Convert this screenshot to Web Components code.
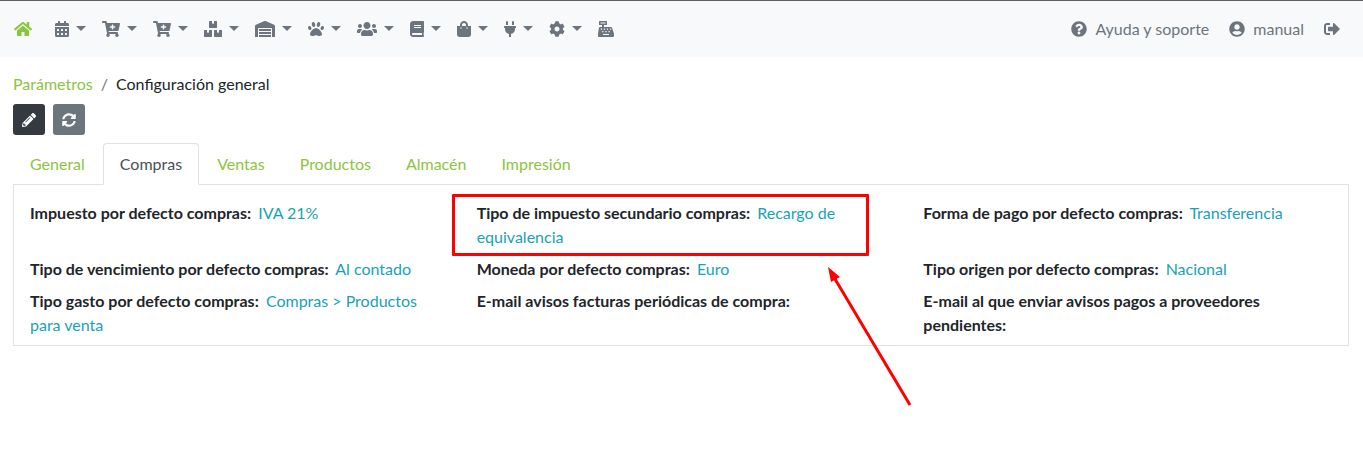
<!DOCTYPE html>
<html lang="es">
<head>
<meta charset="utf-8">
<title>Configuración general</title>
<style>
  body {
    margin: 0;
    min-height: 100vh;
    font-family: Lato, "Liberation Sans", sans-serif;
    font-size: 16px;
    line-height: 24px;
    color: #212529;
    background-color: #fff;
  }
</style>
</head>
<body>

<app-navbar>
  <nav-item icon="home" label="Inicio" href="#inicio" active></nav-item>
  <nav-item icon="calendar" label="Agenda" menu></nav-item>
  <nav-item icon="cart" label="Compras" menu></nav-item>
  <nav-item icon="cart" label="Ventas" menu></nav-item>
  <nav-item icon="boxes" label="Productos" menu></nav-item>
  <nav-item icon="warehouse" label="Almacén" menu></nav-item>
  <nav-item icon="paw" label="Animales" menu></nav-item>
  <nav-item icon="users" label="Contactos" menu></nav-item>
  <nav-item icon="book" label="Contabilidad" menu></nav-item>
  <nav-item icon="bag" label="Tienda" menu></nav-item>
  <nav-item icon="plug" label="Conexiones" menu></nav-item>
  <nav-item icon="cog" label="Ajustes" menu></nav-item>
  <nav-item icon="register" label="Caja" href="#caja"></nav-item>
  <nav-item slot="end" icon="question" href="#ayuda">Ayuda y soporte</nav-item>
  <nav-item slot="end" icon="user" href="#usuario">manual</nav-item>
  <nav-item slot="end" icon="signout" label="Salir" href="#salir"></nav-item>
</app-navbar>

<settings-page>
  <bread-crumb slot="head" parent="Parámetros">Configuración general</bread-crumb>
  <icon-button slot="tools" icon="pencil" label="Editar" dark></icon-button>
  <icon-button slot="tools" icon="sync" label="Actualizar"></icon-button>
  <tab-link slot="tabs">General</tab-link>
  <tab-link slot="tabs" active>Compras</tab-link>
  <tab-link slot="tabs">Ventas</tab-link>
  <tab-link slot="tabs">Productos</tab-link>
  <tab-link slot="tabs">Almacén</tab-link>
  <tab-link slot="tabs">Impresión</tab-link>

  <setting-field label="Impuesto por defecto compras:">IVA 21%</setting-field>
  <setting-field label="Tipo de impuesto secundario compras:" marked>Recargo de equivalencia</setting-field>
  <setting-field label="Forma de pago por defecto compras:">Transferencia</setting-field>
  <setting-field label="Tipo de vencimiento por defecto compras:">Al contado</setting-field>
  <setting-field label="Moneda por defecto compras:">Euro</setting-field>
  <setting-field label="Tipo origen por defecto compras:">Nacional</setting-field>
  <setting-field label="Tipo gasto por defecto compras:">Compras &gt; Productos para venta</setting-field>
  <setting-field label="E-mail avisos facturas periódicas de compra:"></setting-field>
  <setting-field label="E-mail al que enviar avisos pagos a proveedores pendientes:"></setting-field>
</settings-page>

<script>
// [width, markup], every icon is 512 units high
const ICONS = {
  home: [576, '<path d="M280.37 148.26L96 300.11V464a16 16 0 0 0 16 16l112.06-.29a16 16 0 0 0 15.92-16V368a16 16 0 0 1 16-16h64a16 16 0 0 1 16 16v95.64a16 16 0 0 0 16 16.05L464 480a16 16 0 0 0 16-16V300L295.67 148.26a12.19 12.19 0 0 0-15.3 0zM571.6 251.47L488 182.56V44.05a12 12 0 0 0-12-12h-56a12 12 0 0 0-12 12v72.61L318.47 43a48 48 0 0 0-61 0L4.34 251.47a12 12 0 0 0-1.6 16.9l25.5 31A12 12 0 0 0 45.15 301l235.22-193.74a12.19 12.19 0 0 1 15.3 0L530.9 301a12 12 0 0 0 16.9-1.6l25.5-31a12 12 0 0 0-1.7-16.93z"/>'],
  calendar: [448, '<path fill-rule="evenodd" d="M0 464c0 26.500 21.500 48 48 48h352c26.500 0 48-21.500 48-48V192H0v272zM332 256h40a12 12 0 0 1 12 12v40a12 12 0 0 1-12 12h-40a12 12 0 0 1-12-12v-40a12 12 0 0 1 12-12zm0 128h40a12 12 0 0 1 12 12v40a12 12 0 0 1-12 12h-40a12 12 0 0 1-12-12v-40a12 12 0 0 1 12-12zM204 256h40a12 12 0 0 1 12 12v40a12 12 0 0 1-12 12h-40a12 12 0 0 1-12-12v-40a12 12 0 0 1 12-12zm0 128h40a12 12 0 0 1 12 12v40a12 12 0 0 1-12 12h-40a12 12 0 0 1-12-12v-40a12 12 0 0 1 12-12zM76 256h40a12 12 0 0 1 12 12v40a12 12 0 0 1-12 12H76a12 12 0 0 1-12-12v-40a12 12 0 0 1 12-12zm0 128h40a12 12 0 0 1 12 12v40a12 12 0 0 1-12 12H76a12 12 0 0 1-12-12v-40a12 12 0 0 1 12-12z"/><path d="M400 64h-48V16c0-8.800-7.200-16-16-16h-32c-8.800 0-16 7.200-16 16v48H160V16c0-8.800-7.200-16-16-16h-32c-8.800 0-16 7.200-16 16v48H48C21.500 64 0 85.500 0 112v48h448v-48c0-26.500-21.500-48-48-48z"/>'],
  cart: [576, '<path d="M504.717 320H211.572l6.545 32h268.418c15.401 0 26.816 14.301 23.403 29.319l-5.517 24.276C523.112 414.668 536 433.828 536 456c0 31.202-25.519 56.444-56.824 55.994-29.823-.429-54.35-24.631-55.155-54.447-.44-16.287 6.085-31.049 16.803-41.548H231.176C241.553 426.165 248 440.326 248 456c0 31.813-26.528 57.431-58.67 55.938-28.54-1.325-51.751-24.385-53.251-52.917-1.158-22.034 10.436-41.455 28.051-51.586L93.883 64H24C10.745 64 0 53.255 0 40V24C0 10.745 10.745 0 24 0h102.529c11.401 0 21.228 8.021 23.513 19.19L159.208 64H551.99c15.401 0 26.816 14.301 23.403 29.319l-47.273 208C525.637 312.246 515.923 320 504.717 320zM408 168h-48v-40c0-8.837-7.163-16-16-16h-16c-8.837 0-16 7.163-16 16v40h-48c-8.837 0-16 7.163-16 16v16c0 8.837 7.163 16 16 16h48v40c0 8.837 7.163 16 16 16h16c8.837 0 16-7.163 16-16v-40h48c8.837 0 16-7.163 16-16v-16c0-8.837-7.163-16-16-16z"/>'],
  boxes: [576, '<path d="M560 288h-80v96l-32-21.300-32 21.300v-96h-80c-8.800 0-16 7.200-16 16v192c0 8.800 7.200 16 16 16h224c8.800 0 16-7.200 16-16V304c0-8.800-7.200-16-16-16zm-384-64h224c8.800 0 16-7.200 16-16V16c0-8.800-7.200-16-16-16h-80v96l-32-21.300L256 96V0h-80c-8.800 0-16 7.200-16 16v192c0 8.800 7.200 16 16 16zm64 64h-80v96l-32-21.300L96 384v-96H16c-8.800 0-16 7.200-16 16v192c0 8.800 7.200 16 16 16h224c8.800 0 16-7.200 16-16V304c0-8.800-7.200-16-16-16z"/>'],
  warehouse: [640, '<path d="M504 352H136.4c-4.400 0-8 3.600-8 8l-.1 48c0 4.400 3.600 8 8 8H504c4.400 0 8-3.600 8-8v-48c0-4.400-3.600-8-8-8zm0 96H136.1c-4.400 0-8 3.600-8 8l-.1 48c0 4.400 3.600 8 8 8h368c4.400 0 8-3.600 8-8v-48c0-4.400-3.600-8-8-8zm0-192H136.6c-4.400 0-8 3.600-8 8l-.1 48c0 4.400 3.600 8 8 8H504c4.400 0 8-3.600 8-8v-48c0-4.400-3.600-8-8-8zm106.5-139L338.4 3.700a48.150 48.150 0 0 0-36.900 0L29.500 117C11.700 124.500 0 141.900 0 161.300V504c0 4.400 3.600 8 8 8h80c4.400 0 8-3.600 8-8V256c0-17.600 14.600-32 32.600-32h382.800c18 0 32.600 14.400 32.600 32v248c0 4.400 3.600 8 8 8h80c4.400 0 8-3.600 8-8V161.300c0-19.400-11.700-36.800-29.500-44.300z"/>'],
  paw: [512, '<path d="M256 224c-79.410 0-192 122.760-192 200.250 0 34.900 26.810 55.750 71.740 55.750 48.840 0 81.090-25.080 120.260-25.080 39.510 0 71.850 25.080 120.260 25.080 44.930 0 71.740-20.850 71.740-55.750C448 346.760 335.410 224 256 224z"/><ellipse cx="56" cy="224" rx="52" ry="66" transform="rotate(-17 56 224)"/><ellipse cx="456" cy="224" rx="52" ry="66" transform="rotate(17 456 224)"/><ellipse cx="176" cy="112" rx="54" ry="80" transform="rotate(-15 176 112)"/><ellipse cx="336" cy="112" rx="54" ry="80" transform="rotate(15 336 112)"/>'],
  users: [640, '<path d="M96 224c35.300 0 64-28.700 64-64s-28.700-64-64-64-64 28.700-64 64 28.700 64 64 64zm448 0c35.300 0 64-28.700 64-64s-28.700-64-64-64-64 28.700-64 64 28.700 64 64 64zm32 32h-64c-17.600 0-33.500 7.100-45.100 18.600 40.300 22.100 68.900 62 75.100 109.400h66c17.700 0 32-14.300 32-32v-32c0-35.300-28.700-64-64-64zm-256 0c61.900 0 112-50.100 112-112S381.900 32 320 32 208 82.100 208 144s50.100 112 112 112zm76.800 32h-8.300c-20.800 10-43.900 16-68.500 16s-47.600-6-68.500-16h-8.300C179.600 288 128 339.600 128 403.200V432c0 26.500 21.500 48 48 48h288c26.500 0 48-21.500 48-48v-28.800c0-63.600-51.600-115.200-115.200-115.200zm-223.700-13.400C161.500 263.100 145.600 256 128 256H64c-35.300 0-64 28.700-64 64v32c0 17.700 14.300 32 32 32h65.900c6.300-47.400 34.900-87.300 75.200-109.400z"/>'],
  book: [448, '<path d="M448 360V24c0-13.300-10.700-24-24-24H96C43 0 0 43 0 96v320c0 53 43 96 96 96h328c13.300 0 24-10.700 24-24v-16c0-7.500-3.500-14.300-8.900-18.700-4.200-15.400-4.200-59.300 0-74.700 5.400-4.300 8.900-11.100 8.900-18.600zM128 134c0-3.300 2.700-6 6-6h212c3.300 0 6 2.700 6 6v20c0 3.300-2.700 6-6 6H134c-3.300 0-6-2.700-6-6v-20zm0 64c0-3.300 2.700-6 6-6h212c3.300 0 6 2.700 6 6v20c0 3.300-2.700 6-6 6H134c-3.300 0-6-2.700-6-6v-20zm253.400 250H96c-17.700 0-32-14.300-32-32 0-17.600 14.400-32 32-32h285.400c-1.900 17.100-1.900 46.900 0 64z"/>'],
  bag: [448, '<path d="M352 160v-32C352 57.420 294.579 0 224 0 153.420 0 96 57.420 96 128v32H0v272c0 44.183 35.817 80 80 80h288c44.183 0 80-35.817 80-80V160h-96zm-192-32c0-35.290 28.710-64 64-64s64 28.710 64 64v32H160v-32zm160 120c-13.255 0-24-10.745-24-24s10.745-24 24-24 24 10.745 24 24-10.745 24-24 24zm-192 0c-13.255 0-24-10.745-24-24s10.745-24 24-24 24 10.745 24 24-10.745 24-24 24z"/>'],
  plug: [384, '<path d="M320 32a32 32 0 0 0-64 0v96h64zm48 128H16a16 16 0 0 0-16 16v32a16 16 0 0 0 16 16h16v32a160 160 0 0 0 128 156.800V512h64v-99.200A160 160 0 0 0 352 256v-32h16a16 16 0 0 0 16-16v-32a16 16 0 0 0-16-16zM128 32a32 32 0 0 0-64 0v96h64z"/>'],
  cog: [512, '<path d="M487.4 315.7l-42.600-24.600c4.300-23.200 4.300-47 0-70.200l42.600-24.600c4.900-2.800 7.100-8.600 5.500-14-11.100-35.600-30-67.800-54.700-94.600-3.800-4.100-10-5.100-14.800-2.300L380.8 110c-17.900-15.400-38.500-27.300-60.800-35.100V25.8c0-5.600-3.900-10.500-9.400-11.700-36.700-8.200-74.300-7.800-109.200 0-5.500 1.200-9.400 6.100-9.400 11.700V75c-22.200 7.900-42.800 19.800-60.800 35.100L88.7 85.5c-4.900-2.800-11-1.900-14.800 2.300-24.700 26.700-43.600 58.900-54.700 94.600-1.700 5.400.6 11.200 5.500 14L67.3 221c-4.300 23.200-4.300 47 0 70.200l-42.600 24.600c-4.900 2.800-7.100 8.600-5.500 14 11.100 35.600 30 67.800 54.700 94.600 3.800 4.100 10 5.100 14.800 2.300l42.600-24.600c17.900 15.400 38.500 27.300 60.800 35.100v49.200c0 5.600 3.900 10.500 9.400 11.700 36.700 8.200 74.300 7.800 109.200 0 5.500-1.200 9.400-6.100 9.400-11.700v-49.200c22.200-7.900 42.800-19.800 60.800-35.100l42.600 24.600c4.900 2.800 11 1.900 14.800-2.300 24.700-26.700 43.600-58.900 54.700-94.600 1.500-5.500-.7-11.300-5.600-14.100zM256 336c-44.100 0-80-35.900-80-80s35.900-80 80-80 80 35.900 80 80-35.900 80-80 80z"/>'],
  register: [512, '<path fill-rule="evenodd" d="M48 0h224a16 16 0 0 1 16 16v96a16 16 0 0 1-16 16h-80v64h224c18 0 32 12 36 29l59 179c1 4 1 8 1 12v68a32 32 0 0 1-32 32H32a32 32 0 0 1-32-32v-68c0-4 0-8 1-12l28-179c3-17 17-29 35-29h64v-64H48a16 16 0 0 1-16-16V16A16 16 0 0 1 48 0zM80 48v32h160V48zM88 240v40h40v-40zm98 0v40h40v-40zm98 0v40h40v-40zm98 0v40h40v-40zM136 320v40h40v-40zm100 0v40h40v-40zm100 0v40h40v-40zM160 416v32h192v-32z"/>'],
  question: [512, '<path d="M504 256c0 136.997-111.043 248-248 248S8 392.997 8 256C8 119.083 119.043 8 256 8s248 111.083 248 248zM262.655 90c-54.497 0-89.255 22.957-116.549 63.758-3.536 5.286-2.353 12.415 2.715 16.258l34.699 26.310c5.205 3.947 12.621 3.008 16.665-2.122 17.864-22.658 30.113-35.797 57.303-35.797 20.429 0 45.698 13.148 45.698 32.958 0 14.976-12.363 22.667-32.534 33.976C247.128 238.528 216 254.941 216 296v4c0 6.627 5.373 12 12 12h56c6.627 0 12-5.373 12-12v-1.333c0-28.462 83.186-29.647 83.186-106.667 0-58.002-60.165-102-116.531-102zM256 338c-25.365 0-46 20.635-46 46 0 25.364 20.635 46 46 46s46-20.636 46-46c0-25.365-20.635-46-46-46z"/>'],
  user: [512, '<path transform="translate(8)" d="M248 8C111 8 0 119 0 256s111 248 248 248 248-111 248-248S385 8 248 8zm0 96c48.600 0 88 39.400 88 88s-39.400 88-88 88-88-39.400-88-88 39.400-88 88-88zm0 344c-58.700 0-111.300-26.600-146.500-68.200 18.800-35.400 55.600-59.800 98.500-59.800 2.400 0 4.800.4 7.100 1.100 13 4.200 26.600 6.900 40.900 6.900 14.300 0 28-2.700 40.900-6.900 2.300-.7 4.700-1.100 7.100-1.100 42.900 0 79.700 24.400 98.500 59.800C359.300 421.400 306.700 448 248 448z"/>'],
  signout: [512, '<path d="M497 273L329 441c-15 15-41 4.500-41-17v-96H152c-13.300 0-24-10.700-24-24v-96c0-13.300 10.700-24 24-24h136V88c0-21.400 25.900-32 41-17l168 168c9.300 9.400 9.300 24.600 0 34zM192 436v-40c0-6.600-5.400-12-12-12H96c-17.700 0-32-14.300-32-32V160c0-17.700 14.300-32 32-32h84c6.600 0 12-5.400 12-12V76c0-6.600-5.400-12-12-12H96c-53 0-96 43-96 96v192c0 53 43 96 96 96h84c6.600 0 12-5.400 12-12z"/>'],
  pencil: [512, '<path d="M497.9 142.1l-46.100 46.100c-4.700 4.700-12.300 4.700-17 0l-111-111c-4.700-4.700-4.700-12.300 0-17l46.100-46.100c18.700-18.700 49.100-18.700 67.900 0l60.100 60.100c18.800 18.700 18.800 49.100 0 67.900zM284.2 99.8L21.6 362.4.4 483.9c-2.900 16.400 11.400 30.600 27.800 27.800l121.500-21.300 262.600-262.600c4.700-4.700 4.700-12.300 0-17l-111-111c-4.800-4.700-12.400-4.700-17.100 0zM124.1 339.9c-5.500-5.500-5.500-14.300 0-19.800l154-154c5.500-5.500 14.300-5.500 19.800 0s5.500 14.300 0 19.800l-154 154c-5.500 5.500-14.300 5.500-19.800 0zM88 424h48v36.300l-64.500 11.300-31.100-31.100L51.7 376H88v48z"/>'],
  sync: [512, '<path d="M370.72 133.28C339.458 104.008 298.888 87.962 255.848 88c-77.458.068-144.328 53.178-162.791 126.850-1.344 5.363-6.122 9.150-11.651 9.150H24.103c-7.498 0-13.194-6.807-11.807-14.176C33.933 94.924 134.813 8 256 8c66.448 0 126.791 26.136 171.315 68.685L463.03 40.97C478.149 25.851 504 36.559 504 57.941V192c0 13.255-10.745 24-24 24H345.941c-21.382 0-32.090-25.851-16.971-40.971l41.750-41.749zM32 296h134.059c21.382 0 32.090 25.851 16.971 40.971l-41.750 41.750c31.262 29.273 71.835 45.319 114.876 45.280 77.418-.07 144.315-53.144 162.787-126.849 1.344-5.363 6.122-9.150 11.651-9.150h57.304c7.498 0 13.194 6.807 11.807 14.176C478.067 417.076 377.187 504 256 504c-66.448 0-126.791-26.136-171.315-68.685L48.97 471.03C33.851 486.149 8 475.441 8 454.059V320c0-13.255 10.745-24 24-24z"/>']
};

class AppIcon extends HTMLElement {
  constructor() {
    super();
    this.attachShadow({ mode: "open" });
  }

  connectedCallback() {
    const [width, shape] = ICONS[this.getAttribute("name")];
    this.shadowRoot.innerHTML = `
      <style>
        :host { display: block; flex: none; }
        svg { display: block; height: var(--icon-size, 16px); fill: currentColor; }
      </style>
      <svg viewBox="0 0 ${width} 512" aria-hidden="true">${shape}</svg>
    `;
  }
}
customElements.define("app-icon", AppIcon);

class AppNavbar extends HTMLElement {
  constructor() {
    super();
    this.attachShadow({ mode: "open" });
    this.shadowRoot.innerHTML = `
      <style>
        :host { display: block; }
        nav {
          display: flex;
          justify-content: space-between;
          padding: 8px 15px 8px 6px;
          border-top: 1px solid #5f5f66;
          background-color: #f8f9fa;
        }
        .group { display: flex; }
        .end { gap: 4px; }
      </style>
      <nav>
        <div class="group"><slot></slot></div>
        <div class="group end"><slot name="end"></slot></div>
      </nav>
    `;
  }
}
customElements.define("app-navbar", AppNavbar);

class NavItem extends HTMLElement {
  constructor() {
    super();
    this.attachShadow({ mode: "open" });
  }

  connectedCallback() {
    const icon = this.getAttribute("icon");
    const label = this.getAttribute("label");
    const aria = label ? `aria-label="${label}"` : "";
    const body = this.hasAttribute("menu")
      ? `<button type="button" aria-haspopup="true" ${aria}><app-icon name="${icon}"></app-icon><span class="caret"></span></button>`
      : `<a href="${this.getAttribute("href")}" ${aria}><app-icon name="${icon}"></app-icon>${label ? "" : "<span><slot></slot></span>"}</a>`;
    this.shadowRoot.innerHTML = `
      <style>
        :host { display: block; color: #6c757d; }
        :host([active]) { color: #8bc53f; margin-right: 7px; }
        a, button {
          display: flex;
          align-items: center;
          padding: 8px;
          border: 0;
          background: none;
          font: inherit;
          color: inherit;
          text-decoration: none;
          height: 40px;
          box-sizing: border-box;
        }
        a { gap: 8px; }
        button { gap: 7px; cursor: pointer; }
        .caret {
          border: 5px solid transparent;
          border-top-color: currentColor;
          border-bottom: 0;
          margin-bottom: 2px;
        }
      </style>
      ${body}
    `;
  }
}
customElements.define("nav-item", NavItem);

class BreadCrumb extends HTMLElement {
  constructor() {
    super();
    this.attachShadow({ mode: "open" });
  }

  connectedCallback() {
    this.shadowRoot.innerHTML = `
      <style>
        :host { display: block; }
        nav { display: flex; gap: 8px; }
        a { color: #8bc53f; text-decoration: none; }
        .sep { color: #6c757d; }
      </style>
      <nav><a href="#parametros">${this.getAttribute("parent")}</a><span class="sep">/</span><span><slot></slot></span></nav>
    `;
  }
}
customElements.define("bread-crumb", BreadCrumb);

class IconButton extends HTMLElement {
  constructor() {
    super();
    this.attachShadow({ mode: "open" });
  }

  connectedCallback() {
    this.shadowRoot.innerHTML = `
      <style>
        :host { display: block; --icon-size: 14px; }
        button {
          display: flex;
          align-items: center;
          justify-content: center;
          width: 32px;
          height: 31px;
          padding: 0;
          border: 0;
          border-radius: 3px;
          color: #fff;
          background-color: #6c757d;
          cursor: pointer;
        }
        :host([dark]) button { background-color: #343a40; }
      </style>
      <button type="button" aria-label="${this.getAttribute("label")}">
        <app-icon name="${this.getAttribute("icon")}"></app-icon>
      </button>
    `;
  }
}
customElements.define("icon-button", IconButton);

class TabLink extends HTMLElement {
  constructor() {
    super();
    this.attachShadow({ mode: "open" });
    this.shadowRoot.innerHTML = `
      <style>
        :host { display: block; }
        a {
          display: block;
          padding: 8px 16px;
          border: 1px solid transparent;
          border-radius: 4px 4px 0 0;
          color: #8bc53f;
          text-decoration: none;
        }
        :host([active]) a {
          color: #495057;
          background-color: #fff;
          border-color: #dee2e6 #dee2e6 #fff;
        }
      </style>
      <a href="#tab"><slot></slot></a>
    `;
  }
}
customElements.define("tab-link", TabLink);

class SettingsPage extends HTMLElement {
  constructor() {
    super();
    this.attachShadow({ mode: "open" });
    this.shadowRoot.innerHTML = `
      <style>
        :host { display: block; padding: 15px 14px 15px 13px; }
        .tools { display: flex; gap: 8px; margin: 8px 0; }
        /* the open tab covers the top edge of the panel */
        .tabs {
          display: flex;
          gap: 1px;
          margin-bottom: -1px;
          position: relative;
          z-index: 1;
        }
        .panel {
          display: grid;
          grid-template-columns: repeat(3, 1fr);
          gap: 8px 30px;
          padding: 16px 8px 8px 16px;
          border: 1px solid #dee2e6;
        }
      </style>
      <slot name="head"></slot>
      <div class="tools"><slot name="tools"></slot></div>
      <div class="tabs"><slot name="tabs"></slot></div>
      <div class="panel"><slot></slot></div>
    `;
  }
}
customElements.define("settings-page", SettingsPage);

class SettingField extends HTMLElement {
  constructor() {
    super();
    this.attachShadow({ mode: "open" });
  }

  connectedCallback() {
    const mark = `
      <div class="mark"></div>
      <svg class="arrow" width="90" height="142" viewBox="0 0 90 142" aria-hidden="true">
        <path d="M8 12L83 138" fill="none" stroke="#f00" stroke-width="3"/>
        <path d="M1 0L13 10L4 15z" fill="#f00"/>
      </svg>`;
    this.shadowRoot.innerHTML = `
      <style>
        :host { display: block; position: relative; }
        b { margin-right: 3px; }
        .value { color: #17a2b8; }
        .mark {
          position: absolute;
          inset: -7px 24px -7px -25px;
          border: 3px solid #f00;
          border-radius: 1px;
          pointer-events: none;
        }
        .arrow {
          position: absolute;
          left: 350px;
          top: 66px;
          pointer-events: none;
        }
      </style>
      <b>${this.getAttribute("label")}</b>
      <span class="value"><slot></slot></span>
      ${this.hasAttribute("marked") ? mark : ""}
    `;
  }
}
customElements.define("setting-field", SettingField);
</script>
</body>
</html>
